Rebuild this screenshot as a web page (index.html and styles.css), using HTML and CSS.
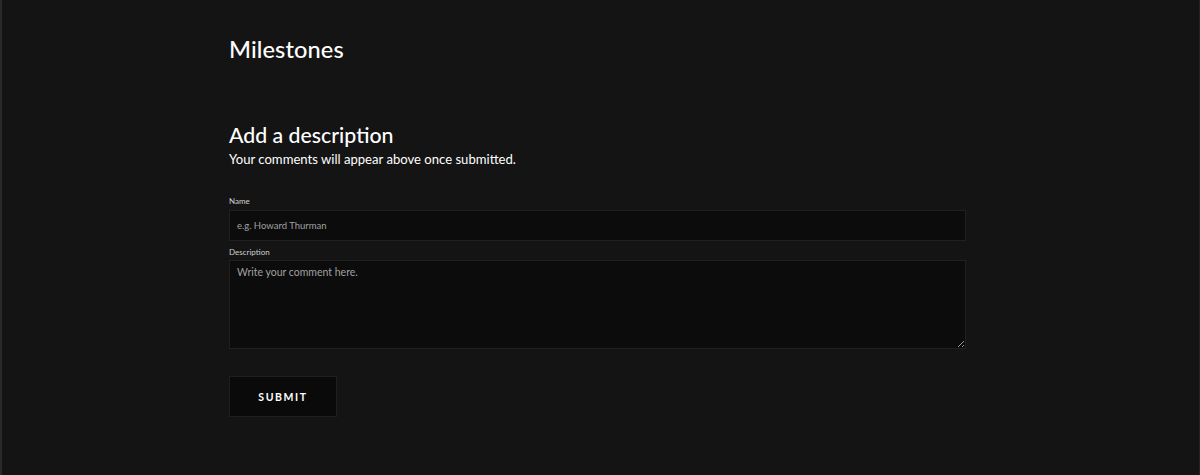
FILE: index.html
```html
<!DOCTYPE html>
<html>
<head>
<meta charset="utf-8">
<link rel="stylesheet" href="styles.css">
</head>
<body>
<div class="frame">
  <main class="content">
    <h1 class="title">Milestones</h1>
    <section class="comment">
      <h2 class="comment-title">Add a description</h2>
      <p class="comment-sub">Your comments will appear above once submitted.</p>
      <form class="form">
        <label class="label" for="name">Name</label>
        <input class="input" id="name" type="text" placeholder="e.g. Howard Thurman">
        <label class="label label-desc" for="desc">Description</label>
        <textarea class="textarea" id="desc" placeholder="Write your comment here."></textarea>
        <button class="submit" type="button">SUBMIT</button>
      </form>
    </section>
  </main>
</div>
</body>
</html>
```

FILE: styles.css
```css
* { box-sizing: border-box; }
html, body { margin: 0; padding: 0; background: #141414; }
body {
  font-family: "Lato", "Open Sans", sans-serif;
  color: #ffffff;
}
.frame {
  width: 1200px;
  height: 475px;
  border-left: 2px solid #2a2a2a;
  border-right: 1px solid #222;
  background: #141414;
}
.content {
  width: 737px;
  margin-left: 227px;
  padding-top: 34px;
}
.title {
  margin: 0;
  font-size: 23.6px;
  font-weight: 500;
  line-height: 30px;
  letter-spacing: 0.1px;
}
.comment { margin-top: 57px; }
.comment-title {
  margin: 0;
  font-size: 21.3px;
  font-weight: 500;
  line-height: 28px;
}
.comment-sub {
  margin: 1px 0 0;
  font-size: 13.1px;
  line-height: 18px;
  font-weight: 400;
}
.form {
  display: flex;
  flex-direction: column;
  align-items: flex-start;
  margin-top: 28px;
}
.label {
  font-size: 8px;
  line-height: 10px;
  color: #d0d0d0;
  margin-bottom: 4px;
}
.label-desc { margin-top: 6px; margin-bottom: 3px; }
.input, .textarea {
  width: 737px;
  background: #0c0c0c;
  border: 1px solid #202020;
  color: #ddd;
  font-family: "Lato", sans-serif;
  font-size: 10.5px;
  outline: none;
}
.input { height: 31px; padding: 0 7px; font-size: 9.5px; }
.textarea { height: 89px; padding: 5px 7px; resize: vertical; }
.input::placeholder, .textarea::placeholder { color: #a0a0a0; }
.submit {
  margin-top: 27px;
  width: 108px;
  height: 41px;
  background: #0a0a0a;
  border: 1px solid #1f1f1f;
  color: #fff;
  font-family: "Lato", sans-serif;
  font-weight: 700;
  font-size: 10.5px;
  letter-spacing: 1.6px;
  cursor: pointer;
}
```
